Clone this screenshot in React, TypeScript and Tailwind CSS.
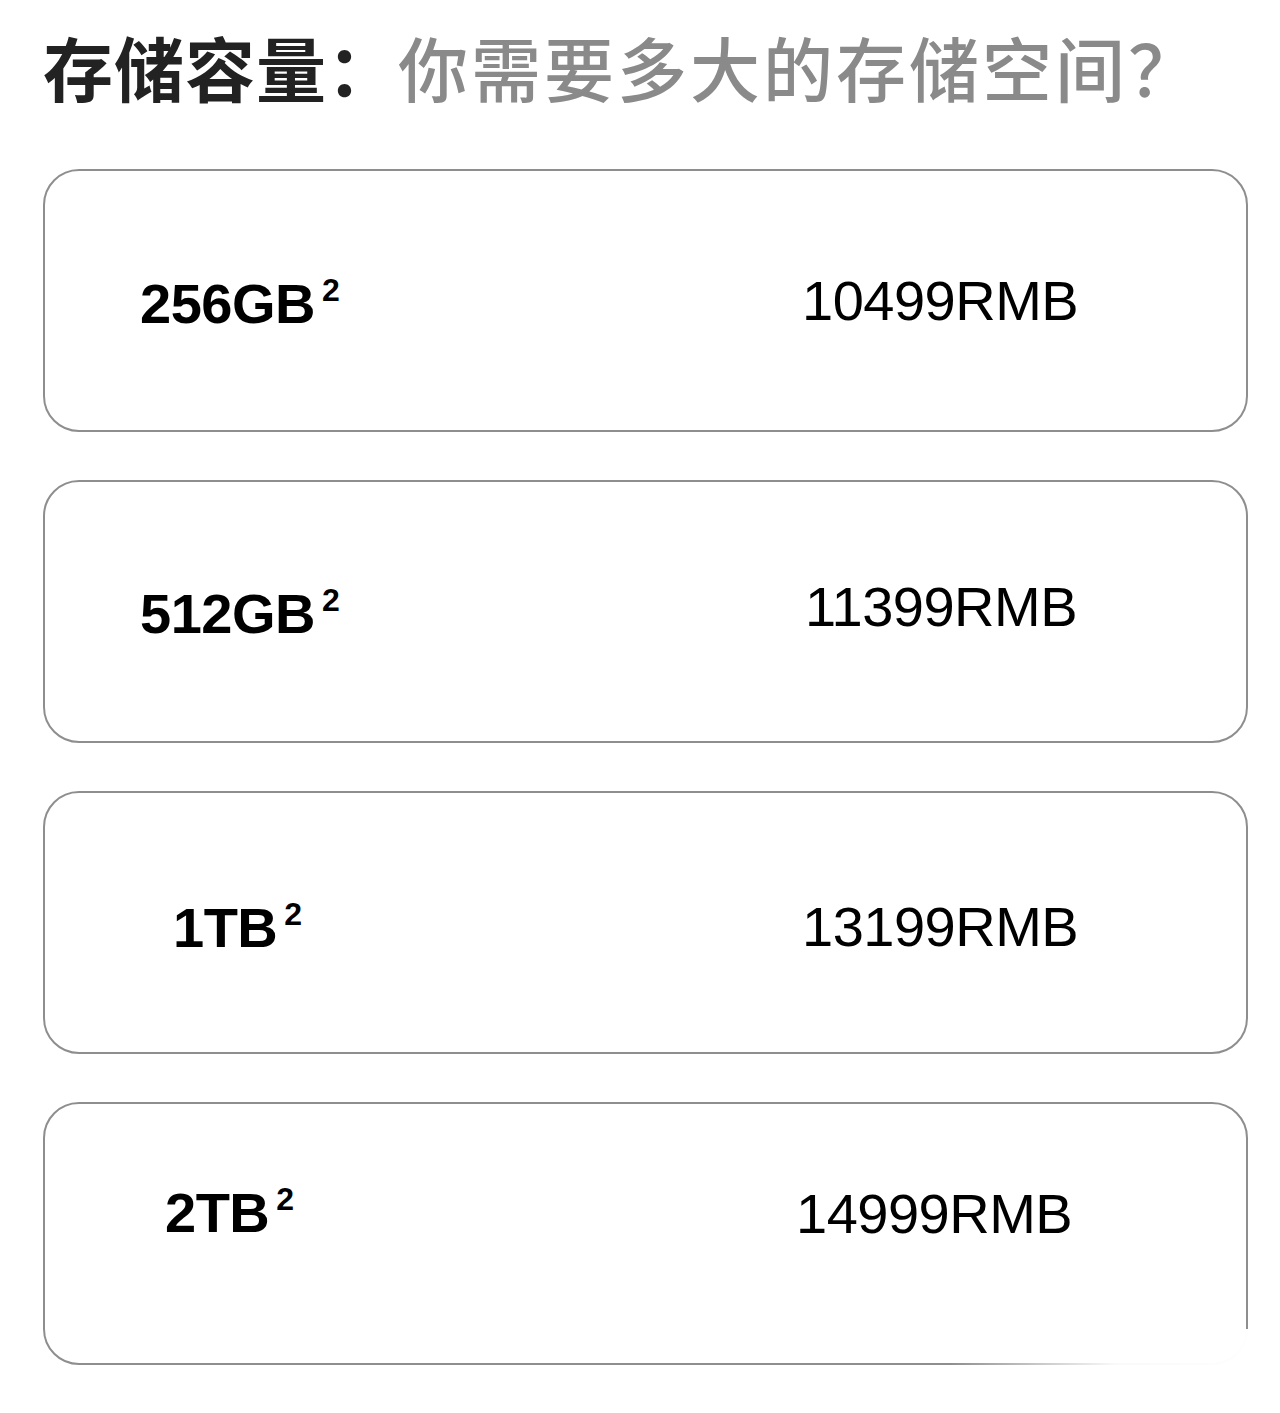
const options = [
  { size: "256GB", price: "10499RMB", labelPad: "pl-[95px] pt-[105px]", pricePad: "pt-[102px]" },
  { size: "512GB", price: "11399RMB", labelPad: "pl-[95px] pt-[104px]", pricePad: "pl-[3px] pt-[97px]" },
  { size: "1TB", price: "13199RMB", labelPad: "pl-[128px] pt-[107px]", pricePad: "pt-[106px]" },
  { size: "2TB", price: "14999RMB", labelPad: "pl-[120px] pt-[81px]", pricePad: "-ml-[6px] pt-[82px]" },
]

export default function App() {
  return (
    <div className="relative min-h-[1413px] bg-white pl-[43px] pr-[32px] pt-[32px] overflow-hidden">
      <h1 className="text-[70px] leading-none whitespace-nowrap font-['Noto_Sans_CJK_SC',sans-serif] mb-[67px]">
        <span className="font-bold text-[#222222] tracking-[1px]">存储容量：</span>
        <span className="font-medium text-[#8a8a8a] tracking-[3px]">你需要多大的存储空间？</span>
      </h1>

      <section className="flex flex-col gap-[48px]">
        {options.map((o) => (
          <article
            key={o.size}
            className="grid grid-cols-[757px_1fr] h-[263px] border-2 border-[#8e8e8e] rounded-[36px] bg-white font-['Liberation_Sans',Arial,sans-serif] text-black"
          >
            <div className={`flex items-start ${o.labelPad}`}>
              <span className="text-[56px] leading-none font-bold tracking-[-0.5px]">{o.size}</span>
              <span className="ml-[7px] -mt-[2px] text-[32px] leading-none font-bold">2</span>
            </div>
            <div className={o.pricePad}>
              <span className="text-[56px] leading-none tracking-[-0.5px]">{o.price}</span>
            </div>
          </article>
        ))}
      </section>

      {/* the source picture fades out in its lower right corner */}
      <div className="absolute right-0 bottom-0 w-[330px] h-[84px] bg-gradient-to-r from-transparent via-white/95 to-white" />
    </div>
  )
}
